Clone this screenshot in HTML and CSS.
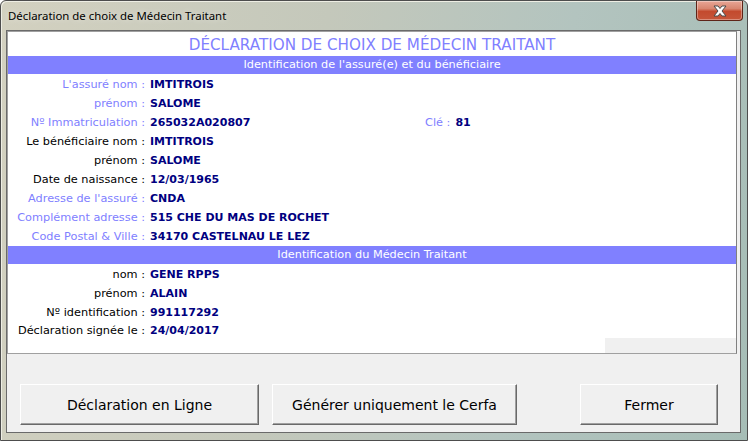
FILE: index.html
```html
<!DOCTYPE html>
<html lang="fr">
<head>
<meta charset="utf-8">
<title>Déclaration de choix de Médecin Traitant</title>
<link rel="stylesheet" href="styles.css">
</head>
<body>
<div class="window">
  <div class="titlebar">
    <span class="title">Déclaration de choix de Médecin Traitant</span>
    <div class="close">
      <svg width="20" height="12" viewBox="0 0 20 12"><path d="M4 1h4l2 2.5L12 1h4l-4 5 4 5h-4l-2-2.5L8 11H4l4-5z" fill="#fff" stroke="#4a4a4a" stroke-width="1"/></svg>
    </div>
  </div>
  <div class="client">
    <div class="panel">
      <div class="heading">DÉCLARATION DE CHOIX DE MÉDECIN TRAITANT</div>
      <div class="band">Identification de l'assuré(e) et du bénéficiaire</div>
      <div class="rows">
        <div class="row"><span class="label alt">L'assuré nom :</span><span class="value">IMTITROIS</span></div>
        <div class="row"><span class="label alt">prénom :</span><span class="value">SALOME</span></div>
        <div class="row"><span class="label alt">Nº Immatriculation :</span><span class="value num">265032A020807</span><span class="label alt key">Clé :</span><span class="value">81</span></div>
        <div class="row"><span class="label">Le bénéficiaire nom :</span><span class="value">IMTITROIS</span></div>
        <div class="row"><span class="label">prénom :</span><span class="value">SALOME</span></div>
        <div class="row"><span class="label">Date de naissance :</span><span class="value">12/03/1965</span></div>
        <div class="row"><span class="label alt">Adresse de l'assuré :</span><span class="value">CNDA</span></div>
        <div class="row"><span class="label alt">Complément adresse :</span><span class="value">515 CHE DU MAS DE ROCHET</span></div>
        <div class="row"><span class="label alt">Code Postal &amp; Ville :</span><span class="value">34170 CASTELNAU LE LEZ</span></div>
      </div>
      <div class="band">Identification du Médecin Traitant</div>
      <div class="rows doc">
        <div class="row"><span class="label">nom :</span><span class="value">GENE RPPS</span></div>
        <div class="row"><span class="label">prénom :</span><span class="value">ALAIN</span></div>
        <div class="row"><span class="label">Nº identification :</span><span class="value">991117292</span></div>
        <div class="row short"><span class="label">Déclaration signée le :</span><span class="value">24/04/2017</span></div>
      </div>
      <div class="corner"></div>
    </div>
    <div class="buttons">
      <button class="btn b1">Déclaration en Ligne</button>
      <button class="btn b2">Générer uniquement le Cerfa</button>
      <button class="btn b3">Fermer</button>
    </div>
  </div>
</div>
</body>
</html>
```
FILE: styles.css
```css
* { box-sizing: border-box; }
html, body { margin: 0; padding: 0; }
body { width: 748px; height: 441px; overflow: hidden; background: #fff; }

.window {
  width: 748px;
  height: 441px;
  border: 1px solid #4d4d4d;
  border-radius: 6px 6px 0 0;
  background: linear-gradient(100deg, #d3d1c0 0%, #c4c8bb 40%, #b3c4bf 70%, #a6bdb6 100%);
  display: flex;
  flex-direction: column;
  box-shadow: inset 1px 1px 0 #eeeee4;
}

.titlebar {
  height: 29px;
  display: flex;
  justify-content: space-between;
  align-items: flex-start;
  padding-left: 7px;
  padding-right: 4px;
}
.title {
  font-family: "Noto Sans", "DejaVu Sans", sans-serif;
  font-size: 11.4px;
  color: #000;
  line-height: 30px;
  text-shadow: 0 0 6px rgba(255,255,255,0.6);
}
.close {
  width: 47px;
  height: 20px;
  border: 1px solid #5e2418;
  border-top: none;
  border-radius: 0 0 4px 4px;
  background: linear-gradient(#e8a696 0%, #d88670 40%, #c34a2e 55%, #c6563a 100%);
  box-shadow: inset 0 0 0 1px rgba(255,255,255,0.35);
  display: flex;
  align-items: center;
  justify-content: center;
}

.client {
  flex: 1;
  margin: 0 6px 7px 5px;
  border: 1px solid #6a6a6a;
  background: #f0f0f0;
  display: flex;
  flex-direction: column;
}

.panel {
  height: 323px;
  margin-right: 3px;
  background: #fff;
  border: 1px solid #a0a0a0;
  border-right-color: #808080;
  border-bottom-color: #a0a0a0;
  display: flex;
  flex-direction: column;
  font-family: "DejaVu Sans", sans-serif;
}

.heading {
  height: 24px;
  text-align: center;
  color: #8080ff;
  font-size: 15.2px;
  line-height: 24px;
  padding-top: 1px;
}

.band {
  height: 18px;
  background: #8080ff;
  color: #fff;
  text-align: center;
  font-size: 11.3px;
  line-height: 18px;
}

.rows { padding-top: 1px; padding-bottom: 0; }
.row {
  display: flex;
  height: 19px;
  align-items: center;
  font-size: 11px;
}
.row.short { height: 16px; }

.label {
  width: 137px;
  text-align: right;
  color: #000;
  white-space: nowrap;
  font-size: 11.3px;
}
.label.alt { color: #8080ff; }
.label.key { width: auto; }
.value {
  padding-left: 5px;
  font-weight: bold;
  color: #000080;
  white-space: nowrap;
}
.value.num { width: 280px; }

.corner {
  margin-top: auto;
  align-self: flex-end;
  width: 131px;
  height: 15px;
  background: #f0f0f0;
}

.buttons {
  display: flex;
  margin-top: 30px;
}
.btn {
  height: 41px;
  font-family: "DejaVu Sans", sans-serif;
  font-size: 14px;
  color: #000;
  background: #f0f0f0;
  border: 1px solid;
  border-color: #fff #696969 #696969 #fff;
  box-shadow: inset -1px -1px 0 #a0a0a0;
  padding: 0;
}
.b1 { width: 239px; margin-left: 13px; }
.b2 { width: 245px; margin-left: 13px; }
.b3 { width: 138px; margin-left: 63px; }
```
